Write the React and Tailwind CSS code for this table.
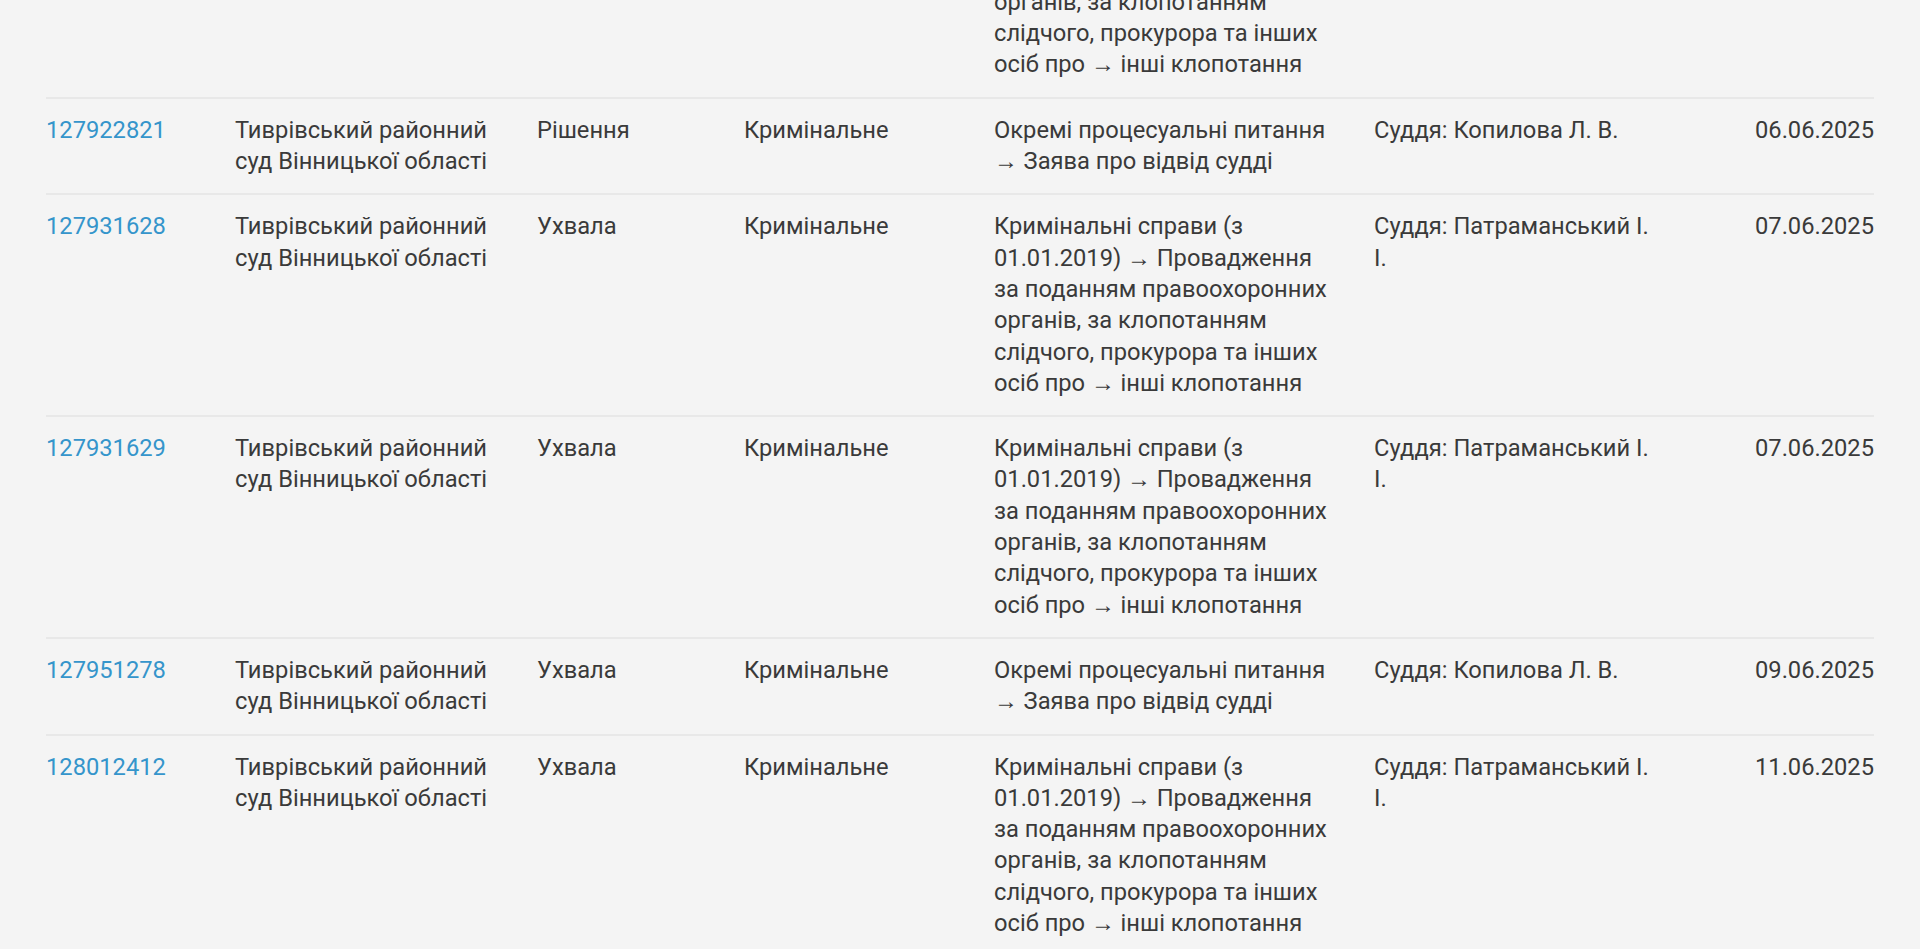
const LONG = "Кримінальні справи (з 01.01.2019) → Провадження за поданням правоохоронних органів, за клопотанням слідчого, прокурора та інших осіб про → інші клопотання";
const SHORT = "Окремі процесуальні питання → Заява про відвід судді";
const COURT = "Тиврівський районний суд Вінницької області";

const rows = [
    { id: "127922810", type: "Ухвала", category: LONG, judge: "Суддя: Патраманський І. І.", date: "05.06.2025" },
    { id: "127922821", type: "Рішення", category: SHORT, judge: "Суддя: Копилова Л. В.", date: "06.06.2025" },
    { id: "127931628", type: "Ухвала", category: LONG, judge: "Суддя: Патраманський І. І.", date: "07.06.2025" },
    { id: "127931629", type: "Ухвала", category: LONG, judge: "Суддя: Патраманський І. І.", date: "07.06.2025" },
    { id: "127951278", type: "Ухвала", category: SHORT, judge: "Суддя: Копилова Л. В.", date: "09.06.2025" },
    { id: "128012412", type: "Ухвала", category: LONG, judge: "Суддя: Патраманський І. І.", date: "11.06.2025" },
];

const Row = ({ row, last }) => (
    <div
        className={`grid grid-cols-[189px_302px_207px_250px_380px_300px_1fr] py-[16px] ${last ? "" : "border-b-2 border-[#e8e8e8]"}`}
    >
        <div>
            <a href="#" className="text-[#3595cb] hover:underline">{row.id}</a>
        </div>
        <div className="pr-[30px]">{COURT}</div>
        <div className="pr-[20px]">{row.type}</div>
        <div className="pr-[20px]">Кримінальне</div>
        <div className="pr-[38px]">{row.category}</div>
        <div className="pr-[16px]">{row.judge}</div>
        <div className="text-right">{row.date}</div>
    </div>
);

export default function App() {
    return (
        <div className="min-h-screen overflow-hidden bg-[#f4f4f4] px-[46px] font-['Roboto',sans-serif] text-[23.7px] leading-[31.3px] text-[#3a3a3a]">
            {/* прокручено: видно лише низ першого рядка */}
            <div className="mt-[-123px]">
                {rows.map((row, i) => (
                    <Row key={row.id} row={row} last={i === rows.length - 1} />
                ))}
            </div>
        </div>
    );
}
